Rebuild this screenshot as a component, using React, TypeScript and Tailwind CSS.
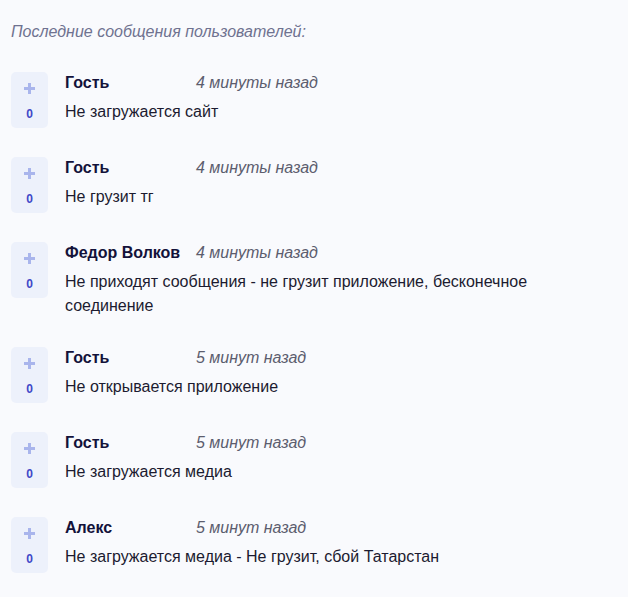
const messages = [
  { name: 'Гость', time: '4 минуты назад', text: 'Не загружается сайт', votes: 0 },
  { name: 'Гость', time: '4 минуты назад', text: 'Не грузит тг', votes: 0 },
  { name: 'Федор Волков', time: '4 минуты назад', text: 'Не приходят сообщения - не грузит приложение, бесконечное соединение', votes: 0 },
  { name: 'Гость', time: '5 минут назад', text: 'Не открывается приложение', votes: 0 },
  { name: 'Гость', time: '5 минут назад', text: 'Не загружается медиа', votes: 0 },
  { name: 'Алекс', time: '5 минут назад', text: 'Не загружается медиа - Не грузит, сбой Татарстан', votes: 0 },
];

function VoteBox({ votes }: { votes: number }) {
  return <div className="w-[37px] h-[56px] shrink-0 rounded-[5px] bg-[#edf1fb] flex flex-col items-center">
    <svg width="11" height="11" viewBox="0 0 11 11" className="mt-[11px]">
      <rect x="4" y="0" width="3" height="11" fill="#a9b5ec" />
      <rect x="0" y="4" width="11" height="3" fill="#a9b5ec" />
    </svg>
    <span className="mt-[13px] text-[12px] leading-[14px] font-bold text-[#3f48c8]">{votes}</span>
  </div>;
}

export default function App() {
  return <div className="min-h-[597px] bg-[#f9fafd] px-[11px] pt-[21px] pb-4" style={{ fontFamily: '"Liberation Sans", Arial, sans-serif' }}>
    <p className="italic text-[16px] leading-[22px] text-[#6f7290] mb-[29px]">Последние сообщения пользователей:</p>
    <div className="flex flex-col gap-[29px]">
      {messages.map((m, i) => (
        <div key={i} className="flex items-start">
          <VoteBox votes={m.votes} />
          <div className="ml-[17px] w-[500px]">
            <div className="flex text-[16px] leading-[22px]">
              <span className="w-[131px] shrink-0 font-bold text-[#13123a]">{m.name}</span>
              <span className="italic text-[#5c5d6e]">{m.time}</span>
            </div>
            <p className="mt-[6px] text-[16px] leading-[24px] text-[#1c1b30]">{m.text}</p>
          </div>
        </div>
      ))}
    </div>
  </div>;
}
